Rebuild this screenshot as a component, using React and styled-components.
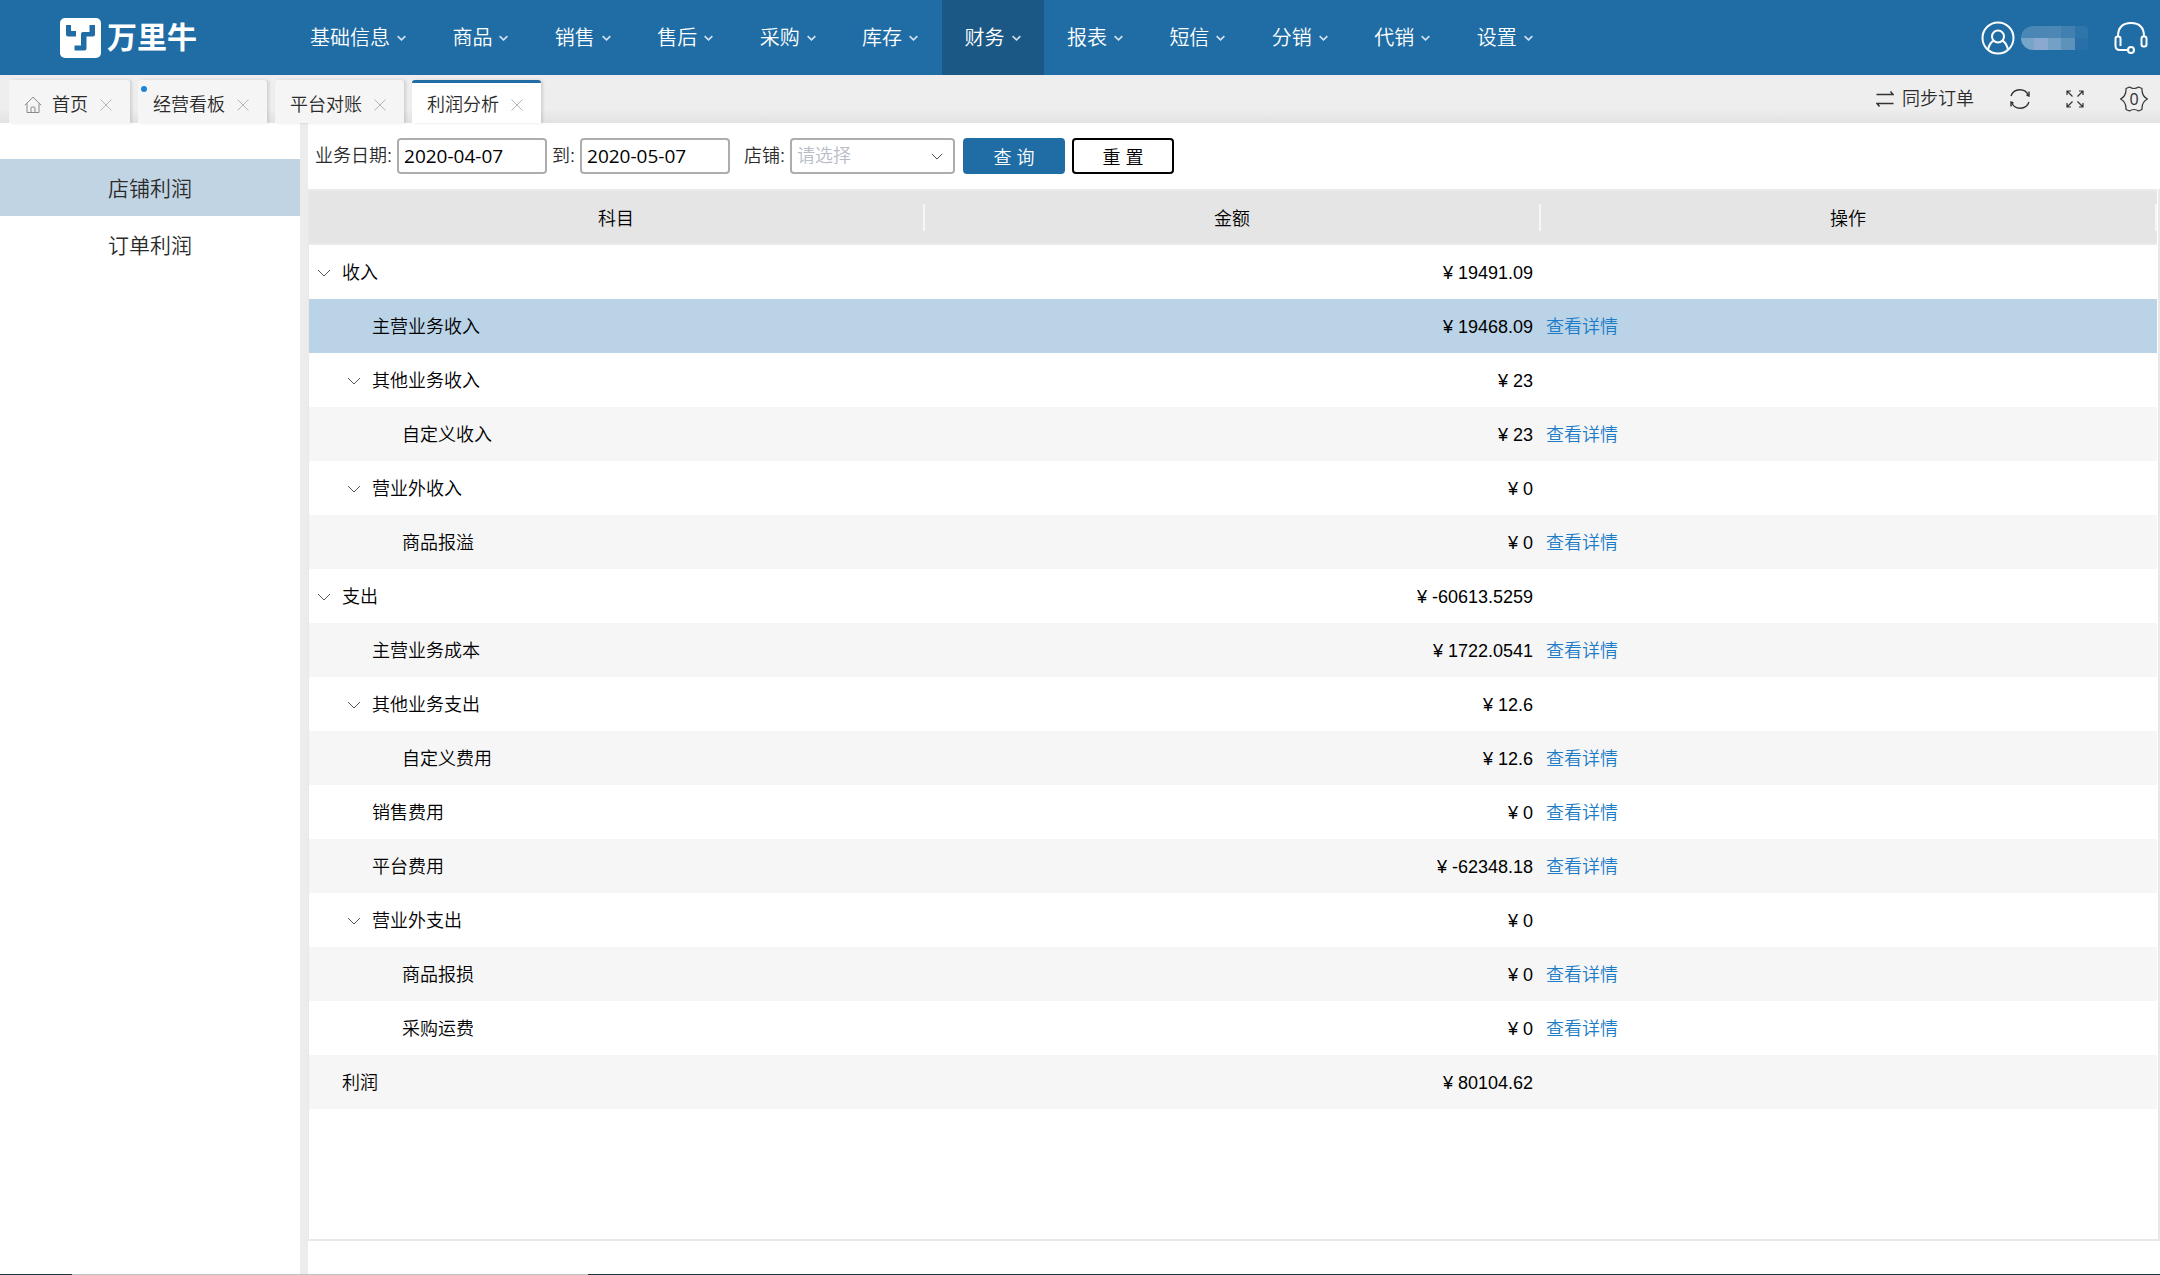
import React from "react";
import styled, { createGlobalStyle } from "styled-components";

const NAV = [
  "基础信息",
  "商品",
  "销售",
  "售后",
  "采购",
  "库存",
  "财务",
  "报表",
  "短信",
  "分销",
  "代销",
  "设置",
];

const TABS = [
  { label: "首页", home: true },
  { label: "经营看板", dot: true },
  { label: "平台对账" },
  { label: "利润分析", active: true },
];

const ROWS = [
  { name: "收入", level: 0, open: true, amount: "19491.09" },
  { name: "主营业务收入", level: 1, amount: "19468.09", detail: true, selected: true },
  { name: "其他业务收入", level: 1, open: true, amount: "23" },
  { name: "自定义收入", level: 2, amount: "23", detail: true },
  { name: "营业外收入", level: 1, open: true, amount: "0" },
  { name: "商品报溢", level: 2, amount: "0", detail: true },
  { name: "支出", level: 0, open: true, amount: "-60613.5259" },
  { name: "主营业务成本", level: 1, amount: "1722.0541", detail: true },
  { name: "其他业务支出", level: 1, open: true, amount: "12.6" },
  { name: "自定义费用", level: 2, amount: "12.6", detail: true },
  { name: "销售费用", level: 1, amount: "0", detail: true },
  { name: "平台费用", level: 1, amount: "-62348.18", detail: true },
  { name: "营业外支出", level: 1, open: true, amount: "0" },
  { name: "商品报损", level: 2, amount: "0", detail: true },
  { name: "采购运费", level: 2, amount: "0", detail: true },
  { name: "利润", level: 0, amount: "80104.62" },
];

const MOSAIC = [
  "#4a87b5", "#4a87b5", "#4d88b5", "#4180b0", "#2e75aa",
  "#75a5c9", "#8ba9d0", "#73a1c6", "#5d92bb", "#2a70a8",
];

const Chevron = ({ size, height, strokeWidth = 1 }) => (
  <svg width={size} height={height} viewBox="0 0 14 8" fill="none" aria-hidden="true">
    <path d="M1 1l6 6 6-6" stroke="currentColor" strokeWidth={strokeWidth} />
  </svg>
);

const CloseIcon = () => (
  <svg width="12" height="12" viewBox="0 0 12 12" fill="none" aria-hidden="true">
    <path d="M.5.5l11 11M11.5.5l-11 11" stroke="#b5b5b5" />
  </svg>
);

const HomeIcon = () => (
  <svg width="18" height="18" viewBox="0 0 18 18" fill="none" stroke="#8a8a8a" aria-hidden="true">
    <path d="M.8 9.2L9 1.2l8.2 8" />
    <path d="M3 7.5v9h12v-9" />
    <path d="M7 16.500v-4.500q0-1 1-1h2q1 0 1 1v4.500" />
  </svg>
);

const LogoMark = () => (
  <svg width="41" height="40" viewBox="0 0 41 40" aria-hidden="true">
    <rect width="41" height="40" rx="5" fill="#fff" />
    <path
      d="M6 7h5v6h5v5.500H8q-2 0-2-2zM29.500 7H35v9.500q0 2-2 2h-6.500v12q0 2-2 2h-10v-5h6.500V16q0-2 2-2h6.500z"
      fill="#206da5"
    />
  </svg>
);

const UserIcon = () => (
  <svg width="34" height="34" viewBox="0 0 34 34" fill="none" stroke="#fff" strokeWidth="2" aria-hidden="true">
    <circle cx="17" cy="17" r="15.500" />
    <circle cx="17" cy="15.500" r="6" />
    <path d="M7 28.500q2-7.500 6-9M27 28.500q-2-7.500-6-9" />
  </svg>
);

const HeadsetIcon = () => (
  <svg width="34" height="34" viewBox="0 0 34 34" fill="none" stroke="#fff" strokeWidth="2" aria-hidden="true">
    <path d="M4 15.500Q4 2 17 2t13 13.500" />
    <path d="M1.500 25v-7.500q0-2 2.500-2t2.500 2V25M1.500 24v1q0 4 4.500 4h8" />
    <rect x="27.500" y="15.500" width="5" height="10" rx="2" />
    <circle cx="17" cy="29" r="3" />
  </svg>
);

const SwapIcon = () => (
  <svg width="18" height="18" viewBox="0 0 18 18" fill="none" stroke="#333" strokeWidth="1.500" aria-hidden="true">
    <path d="M.5 4.500h16.500l-2.500-3M17.500 13.500h-16.500l2.500 3" />
  </svg>
);

const RefreshIcon = () => (
  <svg width="20" height="22" viewBox="0 0 20 22" fill="none" stroke="#333" strokeWidth="1.400" aria-hidden="true">
    <path d="M1 8a9.400 9.400 0 0 1 17.500-.5M19 14a9.400 9.400 0 0 1-17.500.5" />
    <path d="M19 3.500v4.500l-2.500-1M1 18.500v-4.500l2.500 1" />
  </svg>
);

const ExpandIcon = () => (
  <svg width="18" height="18" viewBox="0 0 18 18" fill="none" stroke="#333" strokeWidth="1.200" aria-hidden="true">
    <path d="M1 5v-4h4M1 1l5.500 5.500M13 1h4v4M17 1l-5.500 5.500M1 13v4h4M1 17l5.500-5.500M13 17h4v-4M17 17l-5.500-5.500" />
  </svg>
);

const GearIcon = () => (
  <svg width="28" height="26" viewBox="0 0 28 26" fill="none" stroke="#333" strokeWidth="1.200" aria-hidden="true">
    <path
      d="M9.500 1q4.500 3 9 0l3.500 1.500q-.5 7.500 5.500 10.500q-6 3-5.500 10.500L18.500 25q-4.500-3-9 0L6 23.500Q6.500 16 .5 13Q6.500 10 6 2.500z"
      strokeLinejoin="round"
    />
  </svg>
);

export default function App() {
  return (
    <Page>
      <GlobalStyle />
      <Header>
        <Brand href="#">
          <LogoMark />
          万里牛
        </Brand>
        <Nav>
          {NAV.map((item) => (
            <NavItem key={item} href="#" $active={item === "财务"}>
              {item}
              <Chevron size={9} height={6} strokeWidth={2.5} />
            </NavItem>
          ))}
        </Nav>
        <Account>
          <UserIcon />
          <Mosaic>
            {MOSAIC.map((color, i) => (
              <MosaicCell key={i} $color={color} />
            ))}
          </Mosaic>
          <HeadsetIcon />
        </Account>
      </Header>

      <TabBar>
        <Tabs>
          {TABS.map((tab) => (
            <Tab key={tab.label} $active={tab.active}>
              {tab.dot && <Dot />}
              {tab.home && <HomeIcon />}
              <TabLink href="#">{tab.label}</TabLink>
              <IconButton aria-label={`关闭${tab.label}`}>
                <CloseIcon />
              </IconButton>
            </Tab>
          ))}
        </Tabs>
        <Tools>
          <SyncButton>
            <SwapIcon />
            同步订单
          </SyncButton>
          <IconButton aria-label="刷新">
            <RefreshIcon />
          </IconButton>
          <IconButton aria-label="全屏">
            <ExpandIcon />
          </IconButton>
          <GearButton>
            <GearIcon />
            <GearCount>0</GearCount>
          </GearButton>
        </Tools>
      </TabBar>

      <Body>
        <Sidebar>
          <SideLink href="#" $active>
            店铺利润
          </SideLink>
          <SideLink href="#">订单利润</SideLink>
        </Sidebar>
        <Main>
          <Filters onSubmit={(e) => e.preventDefault()}>
            <Field>
              业务日期:
              <DateInput defaultValue="2020-04-07" />
            </Field>
            <Field>
              到:
              <DateInput defaultValue="2020-05-07" />
            </Field>
            <ShopField>
              店铺:
              <SelectWrapper>
                <Select defaultValue="">
                  <option value="">请选择</option>
                </Select>
                <Chevron size={12} height={7} />
              </SelectWrapper>
            </ShopField>
            <Actions>
              <Button $primary>查 询</Button>
              <Button type="reset">重 置</Button>
            </Actions>
          </Filters>

          <Grid>
            <Table>
              <thead>
                <tr>
                  <Th>科目</Th>
                  <Th>金额</Th>
                  <Th>操作</Th>
                </tr>
              </thead>
              <tbody>
                {ROWS.map((row) => (
                  <Row key={row.name} $selected={row.selected}>
                    <Td>
                      <Subject $level={row.level}>
                        <Toggle>{row.open && <Chevron size={14} height={8} />}</Toggle>
                        {row.name}
                      </Subject>
                    </Td>
                    <AmountTd>¥ {row.amount}</AmountTd>
                    <Td>{row.detail && <DetailLink href="#">查看详情</DetailLink>}</Td>
                  </Row>
                ))}
              </tbody>
            </Table>
          </Grid>
        </Main>
      </Body>
      <BottomEdge>
        <BottomThumb />
      </BottomEdge>
    </Page>
  );
}

const GlobalStyle = createGlobalStyle`
  * {
    box-sizing: border-box;
  }
  body {
    margin: 0;
    background: #fff;
    color: #2b2b2b;
    font: 350 18px/24px "Liberation Sans", "Noto Sans CJK SC", sans-serif;
  }
  a {
    color: inherit;
    text-decoration: none;
  }
  button, input, select {
    font: inherit;
    color: inherit;
  }
  svg {
    display: block;
    flex: none;
  }
`;

const Page = styled.div`
  display: flex;
  flex-direction: column;
  min-height: 100vh;
`;

const Header = styled.header`
  display: flex;
  align-items: stretch;
  height: 75px;
  padding: 0 12px 0 60px;
  background: #206da5;
  color: #fff;
`;

const Brand = styled.a`
  display: flex;
  align-items: center;
  gap: 6px;
  width: 227px;
  font-size: 30px;
  font-weight: 700;
`;

const Nav = styled.nav`
  display: flex;
  width: 1269px;
`;

const NavItem = styled.a`
  display: flex;
  flex: 1 0 auto;
  align-items: center;
  gap: 7px;
  padding: 0 23px;
  font-size: 20px;
  background: ${({ $active }) => ($active ? "#1b5885" : "transparent")};
  svg {
    opacity: 0.8;
  }
`;

const Account = styled.div`
  display: flex;
  align-items: center;
  margin-left: auto;
  gap: 6px;
`;

const Mosaic = styled.div`
  display: grid;
  grid-template-columns: repeat(5, 1fr);
  width: 67px;
  height: 24px;
  margin-right: 20px;
  border-radius: 12px 4px 4px 12px;
  overflow: hidden;
`;

const MosaicCell = styled.span`
  background: ${({ $color }) => $color};
`;

const TabBar = styled.div`
  display: flex;
  justify-content: space-between;
  height: 48px;
  padding: 5px 12px 0 9px;
  background: linear-gradient(#eee 70%, #e2e2e2);
`;

const Tabs = styled.div`
  display: flex;
  gap: 8px;
`;

const Tab = styled.div`
  position: relative;
  display: flex;
  align-items: center;
  padding: 6px 18px 0 15px;
  border-radius: 3px 3px 0 0;
  background: #f5f5f5;
  box-shadow: 2px 0 3px rgba(0, 0, 0, 0.12);
  ${({ $active }) =>
    $active &&
    `background: #fff;
    border-top: 3px solid #206da5;
    padding-top: 3px;
  `}
`;

const Dot = styled.span`
  position: absolute;
  top: 6px;
  left: 3px;
  width: 6px;
  height: 6px;
  border-radius: 50%;
  background: #1c84d6;
`;

const TabLink = styled.a`
  margin-right: 12px;
  svg + & {
    margin-left: 10px;
  }
`;

const IconButton = styled.button`
  display: flex;
  padding: 0;
  border: 0;
  background: none;
  cursor: pointer;
`;

const Tools = styled.div`
  display: flex;
  align-items: center;
  height: 38px;
  gap: 36px;
`;

const SyncButton = styled(IconButton)`
  align-items: center;
  gap: 8px;
`;

const GearButton = styled(IconButton)`
  position: relative;
`;

const GearCount = styled.span`
  position: absolute;
  inset: 0;
  font: 16px/26px "Open Sans", sans-serif;
  text-align: center;
`;

const Body = styled.div`
  display: flex;
  flex: 1;
`;

const Sidebar = styled.aside`
  width: 308px;
  padding-top: 36px;
  border-right: 8px solid #ececec;
`;

const SideLink = styled.a`
  display: block;
  height: 57px;
  font-size: 21px;
  line-height: 60px;
  text-align: center;
  background: ${({ $active }) => ($active ? "#c1d4e3" : "transparent")};
`;

const Main = styled.main`
  display: flex;
  flex: 1;
  flex-direction: column;
  padding-bottom: 33px;
`;

const Filters = styled.form`
  display: flex;
  align-items: center;
  gap: 5px;
  height: 66px;
  padding-left: 7px;
`;

const Field = styled.label`
  display: flex;
  align-items: center;
  gap: 5px;
`;

const ShopField = styled(Field)`
  margin-left: 9px;
`;

const DateInput = styled.input`
  width: 150px;
  height: 36px;
  padding: 0 5px;
  border: 2px solid #adadad;
  border-radius: 4px;
  background: #fff;
  color: #000;
  font: 400 19px/24px "Open Sans", sans-serif;
`;

const SelectWrapper = styled.span`
  display: grid;
  grid-template-columns: 1fr 24px;
  align-items: center;
  width: 165px;
  svg {
    grid-area: 1 / 2;
    pointer-events: none;
  }
`;

const Select = styled.select`
  grid-area: 1 / 1 / 2 / 3;
  height: 36px;
  padding: 0 5px;
  border: 2px solid #adadad;
  border-radius: 4px;
  background: #fff;
  color: #b8bdc7;
  appearance: none;
`;

const Actions = styled.div`
  display: flex;
  gap: 7px;
  margin-left: 3px;
`;

const Button = styled.button`
  width: 102px;
  height: 36px;
  padding: 4px 0 0;
  border: 2px solid ${({ $primary }) => ($primary ? "#206da5" : "#000")};
  border-radius: 4px;
  background: ${({ $primary }) => ($primary ? "#206da5" : "#fff")};
  color: ${({ $primary }) => ($primary ? "#fff" : "#000")};
`;

const Grid = styled.div`
  flex: 1;
  padding-right: 1px;
  border: solid #e8e8e8;
  border-width: 0 2px 2px 1px;
`;

const Table = styled.table`
  width: 100%;
  table-layout: fixed;
  border-collapse: collapse;
  color: #000;
`;

const Th = styled.th`
  height: 56px;
  padding: 4px 2px 0 0;
  background: linear-gradient(#f6f6f6, #f6f6f6) right center / 2px 27px no-repeat #e5e5e5;
  box-shadow: inset 0 2px #eaeaea, inset 0 -2px #eaeaea;
  font-weight: inherit;
  text-align: center;
`;

const Row = styled.tr`
  &:nth-child(even) {
    background: ${({ $selected }) => ($selected ? "#bbd3e7" : "#f6f6f6")};
  }
`;

const Td = styled.td`
  height: 54px;
  padding: 2px 5px 0;
`;

const AmountTd = styled(Td)`
  padding-right: 8px;
  text-align: right;
  font-weight: 400;
`;

const Subject = styled.div`
  display: flex;
  align-items: center;
  padding-left: ${({ $level }) => 3 + $level * 30}px;
`;

const Toggle = styled.span`
  width: 25px;
  color: #555;
`;

const DetailLink = styled.a`
  color: #1c7cc8;
`;

const BottomEdge = styled.div`
  height: 1px;
  padding-left: 72px;
  background: #22333b;
`;

const BottomThumb = styled.div`
  width: 516px;
  height: 1px;
  background: #c0c0c0;
`;
